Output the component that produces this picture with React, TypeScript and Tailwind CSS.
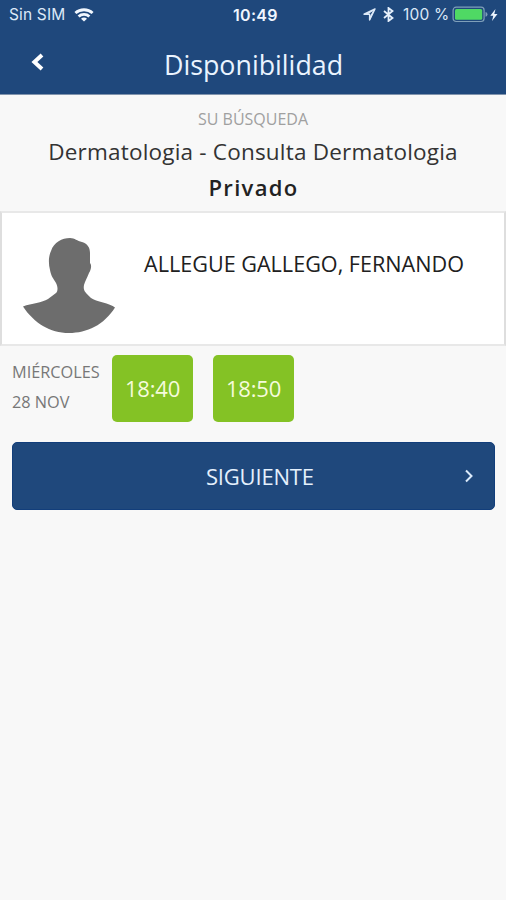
import React from "react";

function StatusBar() {
  return (
    <div className="flex h-7 items-center pt-px font-['Inter','Liberation_Sans',sans-serif] text-[15.5px] leading-7 text-[#dce9f8]">
      <div className="flex w-[233px] items-center pl-[9px]">
        <span className="w-[57px] whitespace-nowrap tracking-[0.15px]">Sin SIM</span>
        <svg className="ml-2" width="20" height="14" viewBox="0 0 20 14" fill="none" stroke="#f2f8ff" strokeWidth="2.8">
          <path d="M1.4 5.1C6.2.6 13.8.6 18.6 5.1" />
          <path d="M4.6 8.5c3-2.8 7.8-2.8 10.8 0" />
          <path d="M10 13.6 7 10.7c1.7-1.5 4.3-1.5 6 0Z" fill="#f2f8ff" stroke="none" />
        </svg>
      </div>
      <span className="w-[130px] text-[16px] font-semibold leading-[26px] tracking-[0.3px] text-[#f0f6ff]">10:49</span>
      <svg width="13" height="13" viewBox="0 0 13 13" fill="none" stroke="#dce9f8" strokeWidth="1.4" strokeLinejoin="round">
        <path d="M12 1 1 6.2h5.6V12Z" />
        <path d="M12 1 1 6.2h4L10 3 7 8v4Z" fill="#dce9f8" stroke="none" />
      </svg>
      <svg className="ml-[7px]" width="11" height="15" viewBox="0 0 11 15" fill="none" stroke="#e6f0fc" strokeWidth="1.8">
        <path d="m1 4 8.5 7L5.5 14V1l4 3L1 11" />
      </svg>
      <span className="ml-[9px] w-[48px] whitespace-nowrap tracking-[0.2px]">100 %</span>
      <svg width="38" height="17" viewBox="0 0 38 17">
        <rect x="2.1" y="1.2" width="31" height="14.3" rx="3" fill="none" stroke="#7f9fb9" strokeWidth="1.2" />
        <rect x="4" y="3" width="27.2" height="10.7" rx="1.5" fill="#4fd964" />
        <path d="M34.5 6.1q2 .3 2 2.3t-2 2.3Z" fill="#7f9fb9" />
      </svg>
      <svg className="ml-px" width="8" height="12" viewBox="0 0 8 12" fill="#eef6ff">
        <path d="M5.5 0 .3 6.8h3L2 12l5.5-7H4.3Z" />
      </svg>
    </div>
  );
}

function Header() {
  return (
    <header className="h-[95px] border-b border-[#8194ad] bg-[#1f487c]">
      <StatusBar />
      <div className="flex h-[73px] items-center">
        <svg className="mb-[6px] ml-[31px]" width="13" height="18" viewBox="0 0 13 18" fill="none" stroke="#fff" strokeWidth="4">
          <path d="M11 2 3.4 9 11 16" />
        </svg>
        <h1 className="ml-[120px] text-[26.8px] leading-[38px] text-[#eaf4ff]">Disponibilidad</h1>
      </div>
    </header>
  );
}

function TimeSlot({ time }: { time: string }) {
  return (
    <button className="h-[67px] w-[81px] rounded-[5px] bg-[#84c225] text-[22px] leading-[67px] tracking-[-0.2px] text-[#f5fbdc]">
      {time}
    </button>
  );
}

export default function App() {
  return (
    <div className="h-[900px] w-[506px] overflow-hidden bg-[#f8f8f8] font-['Open_Sans','Noto_Sans',sans-serif]">
      <Header />
      <section className="flex h-[116px] flex-col items-center pt-[11px] text-center">
        <p className="text-[16px] leading-[26px] text-[#a0a0a0]">SU BÚSQUEDA</p>
        <p className="mt-[2px] whitespace-nowrap text-[22.5px] leading-9 tracking-[0.2px] text-[#333]">Dermatologia - Consulta Dermatologia</p>
        <p className="pl-px text-[22px] font-semibold leading-[34px] tracking-[1.3px] text-[#222]">Privado</p>
      </section>
      <section className="flex h-[135px] border-2 border-x-[#dedede] border-y-[#e8e8e8] bg-white">
        <svg className="ml-[20px] mt-[24px] shrink-0" width="94" height="98" viewBox="0 0 94 98" fill="#6d6d6d">
          <path d="M1 69.5C10 66 20 66 26 62L34 56C36 54 36 50 34 46C31 41 29 39 28 33C26 25 27 18 29 14C32 5 40 1 48 1C53 1 55 4 60 5C66 7 68 11 68 16V26C70 28 69 33 67 36C65 41 63 44 62 48C61 54 63 55 69 61C74 65 88 66 93 70.5C82 88 65 96 47 96C28 96 12 86 1 69.5Z" />
        </svg>
        <p className="ml-[28px] mt-[33px] whitespace-nowrap text-[21.6px] leading-9 text-[#202020]">ALLEGUE GALLEGO, FERNANDO</p>
      </section>
      <section className="flex h-[96px] pl-3 pt-[9px]">
        <div className="w-[100px] pt-[2px] text-[16.3px] leading-[30px] text-[#777]">
          <p>MIÉRCOLES</p>
          <p>28 NOV</p>
        </div>
        <div className="flex gap-5">
          <TimeSlot time="18:40" />
          <TimeSlot time="18:50" />
        </div>
      </section>
      <button className="ml-3 flex h-[68px] w-[483px] items-center rounded-[5px] border border-[#123e7b] bg-[#1f487c] text-[#e4f0fc]">
        <span className="ml-[193px] w-[258px] text-left text-[22px] leading-9 tracking-[-0.2px]">SIGUIENTE</span>
        <svg width="10" height="14" viewBox="0 0 10 14" fill="none" stroke="#dbeafa" strokeWidth="2">
          <path d="m2 1.5 5.5 5.5L2 12.5" />
        </svg>
      </button>
    </div>
  );
}
